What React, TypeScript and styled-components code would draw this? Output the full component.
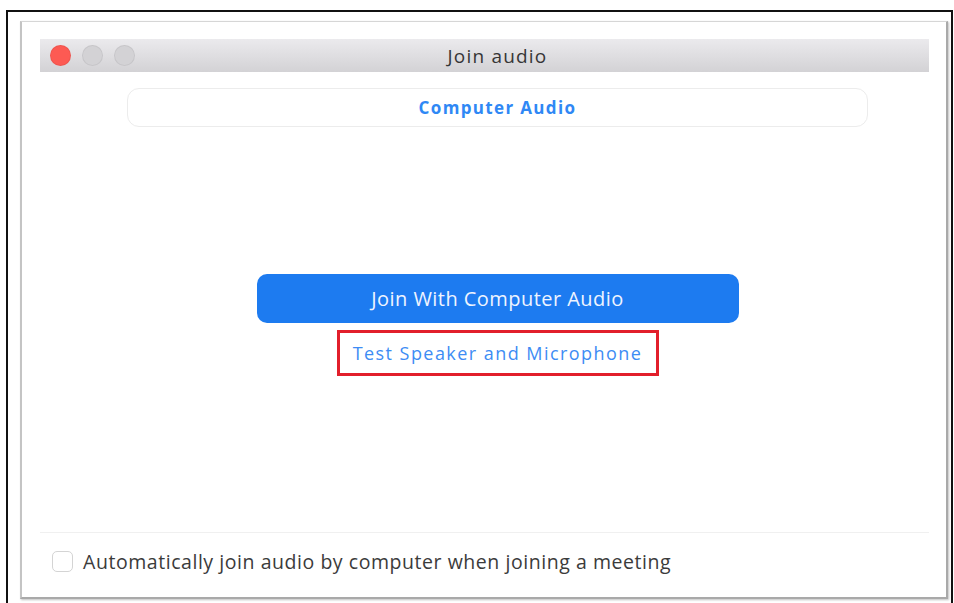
import * as React from 'react'
import styled, { createGlobalStyle } from 'styled-components'

const GlobalStyle = createGlobalStyle`
  html, body {
    margin: 0;
    padding: 0;
    background: #ffffff;
    overflow: hidden;
  }
  body {
    font-family: "Open Sans", "Liberation Sans", Arial, sans-serif;
  }
`

const Frame = styled.div`
  box-sizing: border-box;
  margin: 10px 0 0 6px;
  width: 947px;
  height: 600px;
  border: 2px solid #111;
  border-bottom: none;
  padding: 9px 0 0 12px;
`

const Window = styled.div`
  box-sizing: border-box;
  width: 928px;
  height: 578px;
  background: #fff;
  border: 1px solid #d6d6d6;
  border-right: 2px solid #a9a9a9;
  border-bottom: 2px solid #a9a9a9;
  border-left: 2px solid #c4c4c4;
  box-shadow: 1px 1px 2px rgba(0, 0, 0, 0.25);
  padding: 17px 17px 0 18px;
  display: flex;
  flex-direction: column;
`

const TitleBar = styled.div`
  position: relative;
  height: 33px;
  background: linear-gradient(#ebeaed, #d3d2d5);
  display: flex;
  align-items: center;
  justify-content: center;
  padding-left: 26px;
`

const Lights = styled.div`
  position: absolute;
  left: 10px;
  top: 6px;
  display: flex;
  gap: 11px;
`

const Light = styled.span<{ $color: string }>`
  width: 21px;
  height: 21px;
  border-radius: 50%;
  background: ${p => p.$color};
  box-shadow: inset 0 0 0 1px rgba(0, 0, 0, 0.06);
`

const Title = styled.div`
  font-size: 19px;
  color: #363636;
  letter-spacing: 1.2px;
`

const Content = styled.div`
  flex: 1;
  display: flex;
  flex-direction: column;
  align-items: center;
  padding-left: 26px;
`

const Tab = styled.div`
  box-sizing: border-box;
  margin-top: 16px;
  width: 741px;
  height: 39px;
  border: 1px solid #ececec;
  border-radius: 12px;
  display: flex;
  align-items: center;
  justify-content: center;
  font-size: 17px;
  font-weight: 700;
  letter-spacing: 1.35px;
  color: #2f88f5;
`

const JoinButton = styled.button`
  margin-top: 147px;
  width: 482px;
  height: 49px;
  border: none;
  border-radius: 10px;
  background: #1d7bf0;
  color: #eef4ff;
  font-family: inherit;
  font-size: 20px;
  letter-spacing: 0.45px;
  padding: 0;
`

const Highlight = styled.div`
  box-sizing: border-box;
  margin-top: 7px;
  width: 322px;
  height: 46px;
  border: 3px solid #e21f2b;
  display: flex;
  align-items: center;
  justify-content: center;
  font-size: 18px;
  letter-spacing: 1.45px;
  color: #3d8cf4;
`

const Footer = styled.div`
  box-sizing: border-box;
  border-top: 1px solid #f0f0f0;
  height: 47px;
  display: flex;
  align-items: flex-start;
  padding: 18px 0 0 12px;
  margin-bottom: 18px;
  gap: 10px;
`

const Checkbox = styled.span`
  box-sizing: border-box;
  width: 21px;
  height: 21px;
  border: 1px solid #d4d4d4;
  border-radius: 5px;
  background: #fff;
`

const FooterText = styled.span`
  font-size: 19.5px;
  line-height: 22px;
  letter-spacing: 0.55px;
  color: #3b3b3b;
`

export default function App() {
  return (
    <>
      <GlobalStyle />
      <Frame>
        <Window>
          <TitleBar>
            <Lights>
              <Light $color="#fd5a53" />
              <Light $color="#d3d2d5" />
              <Light $color="#d3d2d5" />
            </Lights>
            <Title>Join audio</Title>
          </TitleBar>
          <Content>
            <Tab>Computer Audio</Tab>
            <JoinButton>Join With Computer Audio</JoinButton>
            <Highlight>Test Speaker and Microphone</Highlight>
          </Content>
          <Footer>
            <Checkbox />
            <FooterText>Automatically join audio by computer when joining a meeting</FooterText>
          </Footer>
        </Window>
      </Frame>
    </>
  )
}
